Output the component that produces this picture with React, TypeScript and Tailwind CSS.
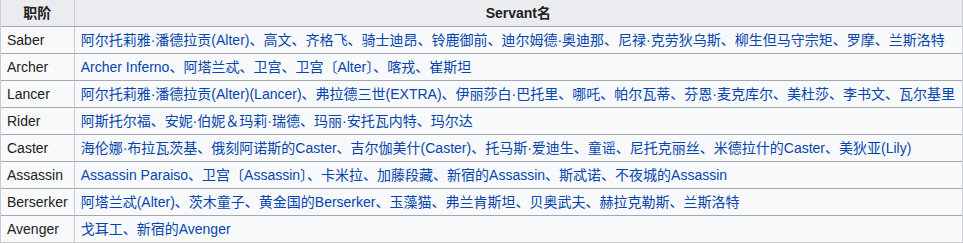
const rows: [string, string][] = [
  ['Saber', '阿尔托莉雅·潘德拉贡(Alter)、高文、齐格飞、骑士迪昂、铃鹿御前、迪尔姆德·奥迪那、尼禄·克劳狄乌斯、柳生但马守宗矩、罗摩、兰斯洛特'],
  ['Archer', 'Archer Inferno、阿塔兰忒、卫宫、卫宫〔Alter〕、喀戎、崔斯坦'],
  ['Lancer', '阿尔托莉雅·潘德拉贡(Alter)(Lancer)、弗拉德三世(EXTRA)、伊丽莎白·巴托里、哪吒、帕尔瓦蒂、芬恩·麦克库尔、美杜莎、李书文、瓦尔基里'],
  ['Rider', '阿斯托尔福、安妮·伯妮＆玛莉·瑞德、玛丽·安托瓦内特、玛尔达'],
  ['Caster', '海伦娜·布拉瓦茨基、俄刻阿诺斯的Caster、吉尔伽美什(Caster)、托马斯·爱迪生、童谣、尼托克丽丝、米德拉什的Caster、美狄亚(Lily)'],
  ['Assassin', 'Assassin Paraiso、卫宫〔Assassin〕、卡米拉、加藤段藏、新宿的Assassin、斯忒诺、不夜城的Assassin'],
  ['Berserker', '阿塔兰忒(Alter)、茨木童子、黄金国的Berserker、玉藻猫、弗兰肯斯坦、贝奥武夫、赫拉克勒斯、兰斯洛特'],
  ['Avenger', '戈耳工、新宿的Avenger'],
];

export default function App() {
  return (
    <div className="w-[963px] bg-white font-['Liberation_Sans','Noto_Sans_CJK_SC',sans-serif] text-[14px] leading-[20px] text-[#202122]">
      <div className="border-x border-b border-[#c8ccd1] bg-[#f8f9fa]">
        <table className="w-full border-separate border-spacing-0">
          <thead>
            <tr className="bg-[#eaecf0]">
              <th className="w-[73px] border-r border-b border-r-[#c8ccd1] border-b-[#a2a9b1] px-[6px] py-[3px] text-center font-bold">职阶</th>
              <th className="border-b border-[#a2a9b1] px-[6px] py-[3px] text-center font-bold">Servant名</th>
            </tr>
          </thead>
          <tbody>
            {rows.map(([cls, names], i) => {
              const last = i === rows.length - 1;
              return (
                <tr key={cls}>
                  <td className={`border-r border-r-[#c8ccd1] border-b-[#a2a9b1] px-[6px] py-[3px] whitespace-nowrap ${last ? 'border-b-0' : 'border-b'}`}>{cls}</td>
                  <td className={`border-b-[#a2a9b1] px-[6px] py-[3px] text-[#0645ad] whitespace-nowrap ${last ? 'border-b-0' : 'border-b'}`}>{names}</td>
                </tr>
              );
            })}
          </tbody>
        </table>
      </div>
    </div>
  );
}
